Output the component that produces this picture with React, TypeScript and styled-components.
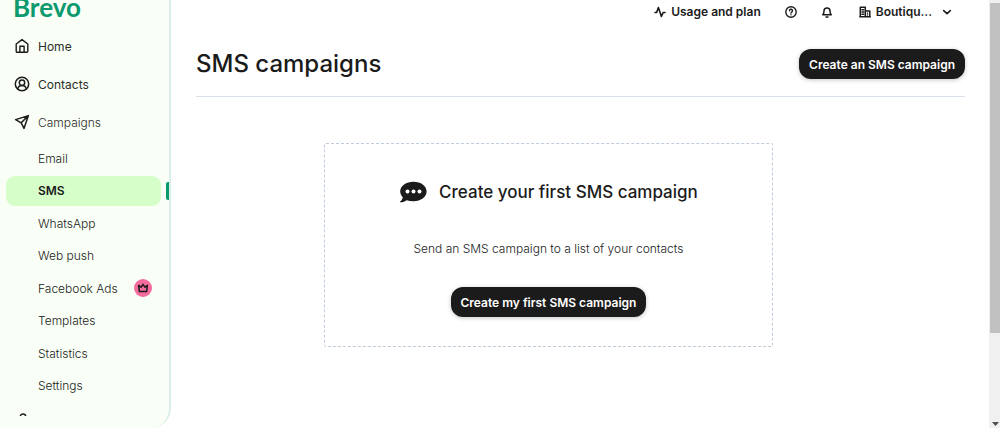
import React from "react";
import styled, { createGlobalStyle } from "styled-components";

const GlobalStyle = createGlobalStyle`
  * { box-sizing: border-box; }
  body {
    margin: 0;
    background: #fff;
    color: #1b1b1b;
    font-family: Inter, "Liberation Sans", sans-serif;
  }
`;

const Page = styled.div`
  display: flex;
  height: 100vh;
  overflow: hidden;
`;

const Sidebar = styled.nav`
  display: flex;
  flex-direction: column;
  flex: 0 0 171px;
  padding-bottom: 12px;
  background: #f9fff6;
  border: solid #d9efe8;
  border-width: 0 2px 0 0;
  border-bottom-right-radius: 20px;
`;

const Logo = styled.a`
  flex: none;
  height: 20px;
  padding-left: 13px;
  color: #0b996e;
  font-family: Lato, sans-serif;
  font-size: 26px;
  font-weight: 700;
  line-height: 14px;
  text-decoration: none;
`;

const NavScroll = styled.div`
  flex: 1;
  min-height: 0;
  padding-top: 7px;
  overflow: hidden;
`;

const NavList = styled.ul`
  margin: 0;
  padding: 0;
  list-style: none;
`;

const MainLink = styled.a<{ $muted?: boolean }>`
  display: flex;
  align-items: center;
  gap: 8px;
  height: 38px;
  padding-left: 14px;
  color: #2b2d2a;
  font-size: 12px;
  font-weight: ${(p) => (p.$muted ? 300 : 400)};
  text-decoration: none;
  svg { color: #1b1b1b; }
`;

const SubList = styled.ul`
  display: flex;
  flex-direction: column;
  justify-content: space-between;
  height: 258px;
  margin: 2px 0 0;
  padding: 0;
  list-style: none;
`;

const SubItem = styled.li`
  display: flex;
  align-items: center;
  justify-content: space-between;
  padding-left: 6px;
`;

const SubLink = styled.a`
  display: flex;
  align-items: center;
  justify-content: space-between;
  width: 155px;
  height: 30px;
  padding: 0 9px 0 32px;
  border-radius: 9px;
  color: #1b1b1b;
  font-size: 12px;
  font-weight: 300;
  text-decoration: none;
  &[aria-current="page"] {
    background: #d6fec8;
    font-weight: 600;
  }
`;

const ActiveMark = styled.span`
  width: 3px;
  height: 18px;
  background: #0b996e;
  border-radius: 2px 0 0 2px;
`;

const PremiumBadge = styled.span`
  display: grid;
  place-items: center;
  width: 18px;
  height: 18px;
  border-radius: 50%;
  background: #f66b9d;
`;

const Main = styled.main`
  flex: 1;
  min-width: 0;
  padding: 0 24px 0 25px;
`;

const TopBar = styled.div`
  display: flex;
  justify-content: flex-end;
  align-items: center;
  height: 24px;
  padding-right: 12px;
`;

const TopButton = styled.button<{ $gap?: number }>`
  display: flex;
  align-items: center;
  gap: 5px;
  padding: 0;
  margin-left: ${(p) => p.$gap ?? 0}px;
  border: 0;
  background: none;
  color: inherit;
  font-family: inherit;
  font-size: 12px;
  font-weight: 600;
  line-height: 16px;
`;

const Chevron = styled.span`
  display: flex;
  margin-left: 4px;
`;

const PageHeader = styled.header`
  display: flex;
  align-items: center;
  justify-content: space-between;
  height: 73px;
  padding-top: 8px;
  border-bottom: 1px solid #d9e2ec;
`;

const Title = styled.h1`
  margin: 0;
  font-size: 24px;
  font-weight: 500;
  line-height: 32px;
`;

const PrimaryButton = styled.button`
  height: 30px;
  padding: 0 10px;
  border: 0;
  border-radius: 12px;
  background: #1b1b1b;
  box-shadow: 0 1px 4px rgba(27, 27, 27, 0.25);
  color: #fff;
  font-family: inherit;
  font-size: 12px;
  font-weight: 600;
  white-space: nowrap;
`;

const EmptyState = styled.section`
  display: flex;
  flex-direction: column;
  align-items: center;
  width: calc(100% * 7 / 12);
  margin: 46px 0 0 calc(100% / 6);
  padding: 36px 20px 29px;
  border: 1px dashed #c0ccda;
  border-radius: 2px;
`;

const EmptyTitle = styled.h2`
  display: flex;
  align-items: center;
  gap: 12px;
  margin: 0 0 36px;
  font-size: 17px;
  font-weight: 500;
  line-height: 24px;
`;

const EmptyText = styled.p`
  margin: 0 0 29px;
  font-size: 12px;
  font-weight: 300;
  line-height: 18px;
`;

const ScrollTrack = styled.div`
  display: flex;
  flex-direction: column;
  justify-content: space-between;
  align-items: center;
  flex: 0 0 11px;
  padding: 3px 0 2px 1px;
  background: #f0f0f0;
`;

const ScrollThumb = styled.div`
  width: 10px;
  height: 78%;
  background: #c1c1c1;
`;

const stroke = {
  fill: "none",
  stroke: "currentColor",
  strokeLinecap: "round" as const,
  strokeLinejoin: "round" as const,
};

const HomeIcon = () => (
  <svg width="16" height="16" viewBox="0 0 16 16" {...stroke} strokeWidth="1.4" aria-hidden="true">
    <path d="M2.200 6 8 1.600 13.800 6v7.200a1 1 0 0 1-1 1H3.200a1 1 0 0 1-1-1zM5.900 14V8.200h4.200V14" />
  </svg>
);

const ContactIcon = () => (
  <svg width="16" height="16" viewBox="0 0 16 16" {...stroke} strokeWidth="1.5" aria-hidden="true">
    <circle cx="8" cy="8" r="6.7" />
    <circle cx="8" cy="6.7" r="2.7" />
    <path d="M3.800 13c.3-2 1.800-3.400 4.200-3.400s3.900 1.400 4.200 3.400" />
  </svg>
);

const SendIcon = () => (
  <svg width="16" height="16" viewBox="0 0 16 16" {...stroke} strokeWidth="1.5" aria-hidden="true">
    <path d="M14.400 1.600 1.600 5.600l5.600 3.200 2.800 5.600zM14.400 1.600 7.200 8.800" />
  </svg>
);

const CrownIcon = () => (
  <svg width="12" height="12" viewBox="0 0 12 12" {...stroke} strokeWidth="1.5" aria-hidden="true">
    <path d="M1.600 3.400 4 5.200 6 2.400l2 2.800 2.400-1.800-.8 6.200H2.400z" />
  </svg>
);

const PulseIcon = () => (
  <svg width="12" height="12" viewBox="0 0 12 12" {...stroke} strokeWidth="1.6" aria-hidden="true">
    <path d="M1 6.500h1.600L4.400 1.600l3 8.800L9.200 6.500H11" />
  </svg>
);

const HelpIcon = () => (
  <svg width="12" height="12" viewBox="0 0 12 12" {...stroke} strokeWidth="1.4" aria-hidden="true">
    <circle cx="6" cy="6" r="5.200" />
    <path d="M4.500 4.800a1.500 1.500 0 1 1 2.200 1.300c-.5.3-.7.500-.7.900M6 8.700v.1" />
  </svg>
);

const BellIcon = () => (
  <svg width="12" height="12" viewBox="0 0 12 12" {...stroke} strokeWidth="1.500" aria-hidden="true">
    <path d="M1.700 8.800c1-.8 1.300-1.700 1.300-3.800a3 3 0 0 1 6 0c0 2.100.3 3 1.300 3.800zM5 11h2" />
  </svg>
);

const BuildingIcon = () => (
  <svg width="12" height="12" viewBox="0 0 12 12" {...stroke} strokeWidth="1.500" aria-hidden="true">
    <path d="M1.300 10.800V1.300h5v9.500M6.300 5h4.500v5.800M.8 10.800h10.500M3 3.700h1.600M3 6h1.600M3 8.300h1.600M8.500 7.200v.1M8.500 9v.1" />
  </svg>
);

const ChevronIcon = () => (
  <svg width="12" height="12" viewBox="0 0 12 12" {...stroke} strokeWidth="1.600" aria-hidden="true">
    <path d="m2.700 4.600 3.300 3 3.300-3" />
  </svg>
);

const ChatIcon = () => (
  <svg width="28" height="22" viewBox="0 0 28 22" aria-hidden="true">
    <path
      fill="#1b1b1b"
      d="M14.500.8C7.200.8 1.200 5 1.200 10.400c0 2.200 1 4.200 2.600 5.800-.3 2-1.400 3.300-2.600 4.200-.4.400-.1.900.4.900 2.500 0 4.600-1 6-2.100 2.100.700 4.400 1 6.900 1 7.300 0 13.100-4.400 13.100-9.800S21.800.8 14.500.8z"
    />
    <g fill="#fff">
      <circle cx="8.500" cy="10.400" r="2" />
      <circle cx="14.500" cy="10.400" r="2" />
      <circle cx="20.500" cy="10.400" r="2" />
    </g>
  </svg>
);

const AutomationIcon = () => (
  <svg width="16" height="16" viewBox="0 0 16 16" {...stroke} strokeWidth="1.500" aria-hidden="true">
    <circle cx="9" cy="4.700" r="2.700" />
    <path d="M9 7.400v6.600" />
  </svg>
);

const sections = [
  { label: "Home", Icon: HomeIcon },
  { label: "Contacts", Icon: ContactIcon },
  { label: "Campaigns", Icon: SendIcon, muted: true },
];

const channels = [
  { label: "Email" },
  { label: "SMS", active: true },
  { label: "WhatsApp" },
  { label: "Web push" },
  { label: "Facebook Ads", premium: true },
  { label: "Templates" },
  { label: "Statistics" },
  { label: "Settings" },
];

export default function App() {
  return (
    <Page>
      <GlobalStyle />
      <Sidebar aria-label="Main">
        <Logo href="#">Brevo</Logo>
        <NavScroll>
          <NavList>
            {sections.map(({ label, Icon, muted }) => (
              <li key={label}>
                <MainLink href="#" $muted={muted}>
                  <Icon />
                  {label}
                </MainLink>
              </li>
            ))}
          </NavList>
          <SubList>
            {channels.map(({ label, active, premium }) => (
              <SubItem key={label}>
                <SubLink href="#" aria-current={active ? "page" : undefined}>
                  {label}
                  {premium && (
                    <PremiumBadge>
                      <CrownIcon />
                    </PremiumBadge>
                  )}
                </SubLink>
                {active && <ActiveMark />}
              </SubItem>
            ))}
          </SubList>
          <MainLink href="#" aria-label="Automations">
            <AutomationIcon />
          </MainLink>
        </NavScroll>
      </Sidebar>
      <Main>
        <TopBar>
          <TopButton>
            <PulseIcon />
            Usage and plan
          </TopButton>
          <TopButton $gap={24} aria-label="Help">
            <HelpIcon />
          </TopButton>
          <TopButton $gap={24} aria-label="Notifications">
            <BellIcon />
          </TopButton>
          <TopButton $gap={26}>
            <BuildingIcon />
            Boutiqu...
            <Chevron>
              <ChevronIcon />
            </Chevron>
          </TopButton>
        </TopBar>
        <PageHeader>
          <Title>SMS campaigns</Title>
          <PrimaryButton>Create an SMS campaign</PrimaryButton>
        </PageHeader>
        <EmptyState>
          <EmptyTitle>
            <ChatIcon />
            Create your first SMS campaign
          </EmptyTitle>
          <EmptyText>Send an SMS campaign to a list of your contacts</EmptyText>
          <PrimaryButton>Create my first SMS campaign</PrimaryButton>
        </EmptyState>
      </Main>
      <ScrollTrack aria-hidden="true">
        <ScrollThumb />
        <svg width="7" height="4" viewBox="0 0 7 4">
          <path d="M0 0h7L3.500 4z" fill="#505050" />
        </svg>
      </ScrollTrack>
    </Page>
  );
}
